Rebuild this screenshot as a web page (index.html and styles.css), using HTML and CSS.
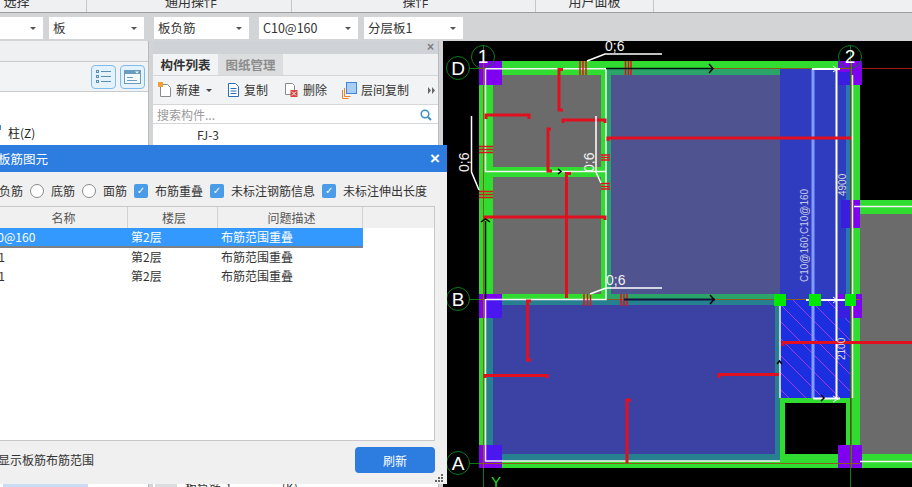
FILE: index.html
```html
<!DOCTYPE html>
<html lang="zh-CN">
<head>
<meta charset="utf-8">
<title>板筋图元</title>
<link rel="stylesheet" href="styles.css">
</head>
<body>
<div class="ribbon">
  <div class="ribbon-cell c1"><span>选择</span></div>
  <div class="ribbon-cell c2"><span>通用操作</span></div>
  <div class="ribbon-cell c3"><span>操作</span></div>
  <div class="ribbon-cell c4"><span>用户面板</span></div>
</div>
<div class="selectbar">
  <div class="select s0"><span></span><i></i></div>
  <div class="select s1"><span>板</span><i></i></div>
  <div class="select s2"><span>板负筋</span><i></i></div>
  <div class="select s3"><span>C10@160</span><i></i></div>
  <div class="select s4"><span>分层板1</span><i></i></div>
</div>
<div class="main">
  <section class="nav-panel">
    <div class="nav-head"></div>
    <div class="nav-tools">
      <button class="view-btn"><svg width="17" height="17" viewBox="0 0 17 17"><g fill="none" stroke="#5a90b8"><rect x="1.5" y="2.5" width="2" height="2"/><rect x="1.5" y="7.5" width="2" height="2"/><rect x="1.5" y="12.5" width="2" height="2"/><path d="M6 3.5h10M6 8.5h10M6 13.5h10"/></g></svg></button>
      <button class="view-btn"><svg width="19" height="17" viewBox="0 0 19 17"><rect x="1.5" y="2.5" width="16" height="13" fill="#f4fafe" stroke="#6a9cc0"/><rect x="2" y="3" width="15" height="3" fill="#6a9cc0"/><path d="M4 9.500h6M4 12.500h10" stroke="#6a9cc0"/><path d="M12 3.500h4l-2 2z" fill="#fff"/></svg></button>
    </div>
    <div class="nav-list">
      <div class="nav-item"><b></b>柱(Z)</div>
    </div>
    <div class="nav-last"></div>
  </section>
  <section class="list-panel">
    <div class="panel-title"><span>×</span></div>
    <div class="tabs"><div class="tab on">构件列表</div><div class="tab">图纸管理</div></div>
    <div class="tools">
      <div class="tool t-new">
        <svg width="15" height="16" viewBox="0 0 15 16"><path d="M2.500 2.500h7l3 3v9h-10z" fill="#fff" stroke="#8a8a8a"/><rect x="0" y="0" width="5" height="5" fill="#f0a030"/></svg>
        <span>新建</span><i></i>
      </div>
      <div class="tool t-copy">
        <svg width="13" height="16" viewBox="0 0 13 16"><path d="M1.500 1.500h7l3 3v10h-10z" fill="#fff" stroke="#2b6fb0"/><path d="M3.500 6.500h6M3.500 9h6M3.500 11.500h6" stroke="#2b6fb0"/></svg>
        <span>复制</span>
      </div>
      <div class="tool t-del">
        <svg width="15" height="16" viewBox="0 0 15 16"><path d="M1.500 1.500h7l2 2v9h-9z" fill="#fff" stroke="#8a8a8a"/><rect x="6.500" y="8" width="7" height="7" fill="#d9433f"/><path d="M8 9.500l4 4M12 9.500l-4 4" stroke="#fff"/></svg>
        <span>删除</span>
      </div>
      <div class="tool t-floor">
        <svg width="15" height="17" viewBox="0 0 15 17"><path d="M.5 8v8.500h6M2.500 6v8.500h6" fill="none" stroke="#e8842c"/><rect x="4.500" y=".5" width="10" height="11" fill="#a9cdf5" stroke="#3d86d8"/></svg>
        <span>层间复制</span>
      </div>
      <svg class="more" width="7" height="7" viewBox="0 0 7 7"><path d="M0 0l3 3.500L0 7zM4 0l3 3.500L4 7z" fill="#666"/></svg>
    </div>
    <div class="search"><span>搜索构件...</span>
      <svg width="12" height="12" viewBox="0 0 12 12"><circle cx="5" cy="5" r="3.800" fill="none" stroke="#3a8fc8" stroke-width="1.500"/><path d="M8 8l3 3" stroke="#3a8fc8" stroke-width="2"/></svg>
    </div>
    <div class="tree-row">FJ-3</div>
    <div class="table-last"><em></em><span>板负筋-1</span><span class="last-b">(K)</span></div>
  </section>
  <div class="gutter"></div>
  <section class="cad">
    <svg class="cad-svg" width="469" height="446" viewBox="443 41 469 446">
      <defs>
        <pattern id="hatch" width="17" height="17" patternUnits="userSpaceOnUse">
          <path d="M-2 -2L19 19M-19 -2L2 19M15 -2L36 19" stroke="#c040f0" stroke-width=".8"/>
        </pattern>
      </defs>
      <rect x="443" y="41" width="469" height="446" fill="#000"/>

      <!-- walls -->
      <rect x="479" y="61" width="383" height="14" fill="#2fdc2f"/>
      <rect x="479" y="61" width="14" height="407" fill="#2fdc2f"/>
      <rect x="846" y="61" width="14" height="407" fill="#2fdc2f"/>
      <rect x="479" y="454" width="381" height="14" fill="#2fdc2f"/>
      <rect x="860" y="200" width="52" height="14" fill="#2fdc2f"/>
      <rect x="860" y="454" width="52" height="14" fill="#2fdc2f"/>

      <!-- rooms -->
      <rect x="493" y="75" width="108" height="92" fill="#6b6b6b"/>
      <rect x="493" y="167" width="113" height="10" fill="#2fdc2f"/>
      <rect x="493" y="177" width="108" height="117" fill="#6b6b6b"/>
      <rect x="601" y="75" width="5" height="225" fill="#2fdc2f"/>
      <rect x="606" y="69" width="174" height="6" fill="#2aa468"/>
      <rect x="606" y="75" width="5" height="225" fill="#2aa468"/>
      <rect x="611" y="75" width="169" height="220" fill="#4f5490"/>
      <rect x="606" y="294" width="174" height="6" fill="#2aa468"/>
      <rect x="493" y="294" width="113" height="6" fill="#2fdc2f"/>
      <rect x="780" y="69" width="66" height="231" fill="#2f3cbf"/>
      <rect x="846" y="75" width="5" height="225" fill="#2a78b0"/>
      <rect x="860" y="214" width="52" height="240" fill="#6b6b6b"/>

      <rect x="485" y="300" width="295" height="161" fill="#27808f"/>
      <rect x="493" y="305" width="282" height="149" fill="#3c42a4"/>

      <!-- hatched overlap -->
      <rect x="780" y="300" width="71" height="98" fill="#1c2fe0"/>
      <rect x="780" y="300" width="71" height="98" fill="url(#hatch)"/>
      <rect x="780" y="398" width="80" height="70" fill="#2fdc2f"/>
      <rect x="785" y="403" width="61" height="51" fill="#000"/>

      <!-- columns -->
      <rect x="479" y="61" width="23" height="24" fill="#8000f0"/>
      <rect x="838" y="61" width="24" height="24" fill="#8000f0"/>
      <rect x="838" y="72" width="13" height="13" fill="#3a1ee0"/>
      <rect x="841" y="200" width="19" height="28" fill="#8000f0"/>
      <rect x="841" y="200" width="10" height="28" fill="#3a1ee0"/>
      <rect x="479" y="294" width="23" height="24" fill="#8000f0"/>
      <rect x="487" y="300" width="15" height="18" fill="#4a18ee"/>
      <rect x="838" y="294" width="24" height="24" fill="#8000f0"/>
      <rect x="838" y="300" width="13" height="18" fill="#3a1ee0"/>
      <rect x="479" y="445" width="23" height="23" fill="#8000f0"/>
      <rect x="487" y="445" width="15" height="16" fill="#4a18ee"/>
      <rect x="838" y="445" width="24" height="23" fill="#8000f0"/>

      <!-- axis lines -->
      <g stroke="#0a7a1e" fill="none">
        <path d="M483.500 45V487M850.500 45V487M470 68.500H479M470 299.500H479M470 463.500H479"/>
        <circle cx="458" cy="68" r="11.500"/>
        <circle cx="483" cy="57" r="11.500"/>
        <circle cx="850" cy="57" r="11.500"/>
        <circle cx="458" cy="299" r="11.500"/>
        <circle cx="458" cy="463" r="11.500"/>
      </g>
      <path d="M479 68.500H850" stroke="#8c5a1c"/>
      <path d="M862 68.500H912" stroke="#a01818"/>
      <path d="M483.500 61V468M851.500 61V468M479 299.500H860M479 463.500H860" stroke="#8c5a1c"/>
      <path d="M851.500 200V228" stroke="#d01070"/>

      <!-- white frame lines -->
      <g stroke="#f4f4f4" stroke-width="1.500" fill="none">
        <path d="M485.500 68.700H606M485.500 68.700V171.500H606M606 68.700V299.500H485.500V461H780"/>
        <path d="M780 305V398M852.500 75V398M854 206.500H912M860 461.500H912"/>
      </g>
      <path d="M813 69V398" stroke="#7f9cff" stroke-width="3"/>
      <path d="M836.500 69V399" stroke="#fff" stroke-width="2"/>
      <path d="M812 69H840M806 300H846M813 398.500H840" stroke="#fff" stroke-width="2"/>
      <path d="M833 66l4 3-4 3M833 297l4 3-4 3M833 396l5 3-5 3" fill="none" stroke="#fff"/>

      <!-- rebar ticks -->
      <g stroke="#e01020" stroke-width="1.500">
        <path d="M580 61V75M583 61V75M586 61V75M625.500 61V75M628.500 61V75M631 61V75"/>
        <path d="M479 146.500H493M479 149.500H493M479 152.500H493M479 191.500H493M479 194.500H493M479 197.500H493"/>
        <path d="M601 155H610M601 157.500H610M601 160H610M601 183.500H610M601 186.500H610M601 189H610"/>
        <path d="M584 294V306M587.500 294V306M590.500 294V306M621 294V306M624 294V306M627 294V306"/>
      </g>

      <!-- red rebars -->
      <g stroke="#e01020" stroke-width="3" fill="none">
        <path d="M563 69.500H559V110H563"/>
        <path d="M486 119V115H529V119"/>
        <path d="M563 123V120H605V123"/>
        <path d="M551 129H548V171H552"/>
        <path d="M571 173.500H566.500V298"/>
        <path d="M485 220V217H605V220"/>
        <path d="M608 141V138H851"/>
        <path d="M531 301H527.500V360H531"/>
        <path d="M485 378V375.500H547V378"/>
        <path d="M631 400H627V463"/>
        <path d="M783 346V342.500H912"/>
        <path d="M719 378V374.500H779"/>
      </g>

      <!-- arrows -->
      <path d="M606 68.500H712" stroke="#061010" stroke-width="1.500"/>
      <path d="M624 299.500H715" stroke="#10103a" stroke-width="2"/>
      <path d="M485.500 221V299" stroke="#000" stroke-width="1.500"/>
      <g fill="none" stroke="#000" stroke-width="1.500">
        <path d="M709 64l4 4.500-4 4.500"/>
        <path d="M710 295l4 4.500-4 4.500"/>
        <path d="M481 222l4.500-3 4.500 3"/>
        <path d="M558 169l3 2.500-3 2.500"/>
        <path d="M777 364l2.500-3 2.500 3"/>
        <path d="M821 395l3 3-3 3"/>
      </g>

      <!-- green nodes -->
      <rect x="774" y="294" width="12" height="12" fill="#00e800"/>
      <rect x="809" y="294" width="12" height="12" fill="#00e800"/>
      <rect x="845" y="294" width="11" height="12" fill="#00e800"/>

      <!-- annotations -->
      <g stroke="#fff" stroke-width="1.500" fill="none">
        <path d="M587 61L605 54H662"/>
        <path d="M590 294L606 288H662"/>
        <path d="M471.500 116V172L479 190"/>
        <path d="M596 116V172L601 183"/>
      </g>
      <g class="anno">
        <text x="605" y="51">0;6</text>
        <text x="606" y="285">0;6</text>
        <text transform="translate(469 172) rotate(-90)">0;6</text>
        <text transform="translate(594 172) rotate(-90)">0;6</text>
      </g>
      <g class="dim">
        <text transform="translate(808 282) rotate(-90)">C10@160;C10@160</text>
        <text class="dim-b" transform="translate(846 196) rotate(-90)">4900</text>
        <text class="dim-b" transform="translate(845 360) rotate(-90)">2100</text>
      </g>
      <g class="axis-label">
        <text x="458" y="75">D</text>
        <text x="483" y="63">1</text>
        <text x="850" y="63">2</text>
        <text x="458" y="306">B</text>
        <text x="458" y="470">A</text>
      </g>
      <text class="axis-y" x="491" y="487">Y</text>
    </svg>
  </section>
</div>

<div class="dialog">
  <header class="dlg-title"><span>板筋图元</span><b>×</b></header>
  <div class="filters">
    <span class="f-first">板负筋</span>
    <i class="radio"></i><span>底筋</span>
    <i class="radio"></i><span>面筋</span>
    <i class="check">✓</i><span>布筋重叠</span>
    <i class="check">✓</i><span>未标注钢筋信息</span>
    <i class="check">✓</i><span>未标注伸出长度</span>
  </div>
  <div class="grid">
    <div class="g-row g-head"><div class="c-name">名称</div><div class="c-floor">楼层</div><div class="c-desc">问题描述</div></div>
    <div class="g-row g-sel"><div class="c-name"><span>C10@160</span></div><div class="c-floor">第2层</div><div class="c-desc">布筋范围重叠</div></div>
    <div class="g-row"><div class="c-name"><span>FJ-1</span></div><div class="c-floor">第2层</div><div class="c-desc">布筋范围重叠</div></div>
    <div class="g-row"><div class="c-name"><span>FJ-1</span></div><div class="c-floor">第2层</div><div class="c-desc">布筋范围重叠</div></div>
  </div>
  <footer class="dlg-foot"><span>显示板筋布筋范围</span><button>刷新</button></footer>
  <svg class="grip" width="9" height="9" viewBox="0 0 9 9"><path d="M6 0h2v2H6zM3 3h2v2H3zM6 3h2v2H6zM0 6h2v2H0zM3 6h2v2H3zM6 6h2v2H6z" fill="#666"/></svg>
</div>
</body>
</html>
```

FILE: styles.css
```css
* { box-sizing: border-box; }
html, body { margin: 0; height: 487px; overflow: hidden; }
body {
  width: 912px;
  position: relative;
  background: #d2d4d6;
  color: #222;
  font: 12px/16px "Noto Sans CJK SC", "Liberation Sans", sans-serif;
  display: flex;
  flex-direction: column;
}

/* ribbon strip */
.ribbon {
  height: 13px;
  flex: none;
  display: flex;
  background: #eff0f1;
  border-bottom: 1px solid #9a9c9e;
  overflow: hidden;
}
.ribbon-cell {
  height: 12px;
  text-align: center;
  border-right: 1px solid #c4c6c8;
  overflow: hidden;
  color: #333;
  font-size: 13px;
}
.ribbon-cell span { display: block; margin-top: -8px; line-height: 18px; }
.c1 { width: 143px; margin-left: -56px; padding-left: 3px; }
.c2 { width: 205px; padding-left: 4px; }
.c3 { width: 244px; padding-left: 4px; }
.c4 { width: 118px; }

/* selects */
.selectbar {
  height: 28px;
  flex: none;
  display: flex;
  align-items: flex-start;
  padding-top: 4px;
  background: #d2d4d6;
}
.select {
  height: 22px;
  background: #fff;
  display: flex;
  align-items: center;
  justify-content: space-between;
  padding: 0 7px 0 4px;
  font-size: 12.500px;
  color: #333;
}
.select i {
  width: 0; height: 0;
  border: 3px solid transparent;
  border-top: 3px solid #555;
  border-bottom: 0;
}
.s0 { width: 43px; margin-right: 6px; }
.s1 { width: 95px; margin-right: 10px; }
.s2 { width: 95px; margin-right: 10px; }
.s3 { width: 99px; margin-right: 6px; }
.s4 { width: 99px; }

/* main row */
.main { flex: 1; display: flex; min-height: 0; }

.nav-panel {
  width: 149px;
  flex: none;
  display: flex;
  flex-direction: column;
  background: #fff;
  border-right: 1px solid #b8babc;
}
.nav-head { height: 21px; background: #eff0f1; border-bottom: 1px solid #c8cacc; }
.nav-tools {
  height: 30px;
  display: flex;
  justify-content: flex-end;
  align-items: center;
  gap: 4px;
  padding-right: 3px;
  background: #f2f3f4;
  border-bottom: 1px solid #c8cacc;
}
.view-btn {
  width: 25px;
  height: 24px;
  padding: 0;
  display: flex;
  align-items: center;
  justify-content: center;
  background: #e4f2fd;
  border: 1px solid #7cbbec;
  border-radius: 4px;
}
.nav-list { flex: 1; padding-top: 33px; }
.nav-item { padding-left: 8px; line-height: 16px; position: relative; }
.nav-item b { position: absolute; left: 0; top: 0; width: 1px; height: 5px; background: #3a8fc8; }
.nav-last { height: 14px; margin: 0 60px 0 3px; background: #c9dcf3; }

.list-panel {
  width: 286px;
  margin-left: 4px;
  flex: none;
  display: flex;
  flex-direction: column;
  background: #fff;
  border-right: 1px solid #b8babc;
}
.panel-title {
  height: 13px;
  background: #cfd2d6;
  text-align: right;
  padding-right: 4px;
  color: #7a7c80;
  font: bold 12px/12px "Liberation Sans", sans-serif;
}
.tabs { height: 22px; display: flex; background: #eff0f1; border-bottom: 1px solid #d4d6d8; }
.tab {
  width: 65px;
  text-align: center;
  line-height: 21px;
  font-size: 12.500px;
  background: #dcdddf;
  color: #8c8c8c;
  font-weight: 700;
}
.tab.on { background: #f2f3f4; color: #333; }
.tools {
  height: 29px;
  position: relative;
  display: flex;
  align-items: center;
  background: #f2f3f4;
  border-bottom: 1px solid #d4d6d8;
  padding-left: 5px;
}
.tool { display: flex; align-items: center; font-size: 12px; color: #333; }
.tool span { margin-left: 4px; }
.tool i {
  width: 0; height: 0; margin-left: 6px;
  border: 3px solid transparent;
  border-top: 3px solid #444;
  border-bottom: 0;
}
.t-new { width: 69px; }
.t-new span { margin-left: 3px; }
.t-copy { width: 57px; }
.t-del { width: 58px; }
.t-floor { width: 86px; }
.more { flex: none; }
.search {
  height: 19px;
  display: flex;
  align-items: center;
  justify-content: space-between;
  padding: 2px 6px 0 4px;
  color: #999;
  border-bottom: 1px solid #d4d6d8;
}
.tree-row { padding-left: 44px; line-height: 22px; color: #333; font-size: 12px; }
.table-last {
  margin-top: auto;
  height: 14px;
  display: flex;
  overflow: hidden;
  color: #333;
}
.table-last em { width: 22px; background: #dcdddf; margin: 0 8px 0 2px; }
.table-last span { line-height: 28px; height: 14px; }
.last-b { margin-left: 50px; }

.gutter { width: 4px; flex: none; background: #d2d4d6; }
.cad { width: 469px; flex: none; background: #000; }
.cad-svg { display: block; }
.anno text { fill: #f2f2f2; font: 14px "Liberation Sans", sans-serif; }
.dim text { fill: #c8cce8; font: 10px "Liberation Sans", sans-serif; }
.dim .dim-b { fill: #d8d8d8; }
.axis-label text {
  fill: #fff;
  font: 19px "Liberation Sans", sans-serif;
  text-anchor: middle;
}
.axis-y { fill: #22dd22; font: 15px "Liberation Sans", sans-serif; }

/* dialog overlay */
.dialog {
  position: absolute;
  left: 0;
  top: 145px;
  width: 447px;
  height: 339px;
  background: #f0f0f0;
  display: flex;
  flex-direction: column;
  overflow: hidden;
}
.dlg-title {
  height: 27px;
  flex: none;
  background: #2d7de0;
  color: #fff;
  display: flex;
  align-items: center;
  justify-content: space-between;
  padding-right: 7px;
  font-size: 12.500px;
}
.dlg-title span { margin-left: -2px; }
.dlg-title b { font: bold 17px/17px "Liberation Sans", sans-serif; }
.filters {
  height: 34px;
  flex: none;
  display: flex;
  align-items: center;
  padding-top: 3px;
  color: #333;
  font-size: 12px;
}
.f-first { margin-left: -13px; }
.radio {
  width: 14px;
  height: 14px;
  border-radius: 50%;
  background: #fff;
  border: 1px solid #8a8a8a;
  margin-left: 7px;
  margin-right: 7px;
  flex: none;
}
.check {
  width: 14px;
  height: 14px;
  border-radius: 2px;
  background: #4a9be8;
  color: #fff;
  font: bold 10px/14px "DejaVu Sans", sans-serif;
  text-align: center;
  margin-left: 7px;
  margin-right: 7px;
  flex: none;
}
.grid {
  width: 435px;
  height: 235px;
  flex: none;
  background: #fff;
  border: 1px solid #c8c8c8;
  border-left: 0;
}
.g-row { display: flex; height: 19px; line-height: 18px; width: 363px; color: #333; }
.g-head {
  height: 21px;
  line-height: 22px;
  width: 100%;
  background: #f0f0f0;
  color: #555;
}
.g-head > div { text-align: center; border-right: 1px solid #d2d2d2; }
.g-sel {
  height: 20px;
  background: #3399ff;
  color: #fff;
  border-bottom: 2px solid #7d8084;
}
.c-name { width: 128px; overflow: hidden; }
.c-name span { display: block; margin-left: -17px; }
.c-floor { width: 90px; padding-left: 3px; }
.c-desc { width: 145px; padding-left: 3px; }
.dlg-foot {
  flex: 1;
  width: 435px;
  display: flex;
  align-items: center;
  justify-content: space-between;
  padding-bottom: 5px;
  font-size: 12px;
  color: #333;
}
.dlg-foot span { margin-left: -2px; }
.dlg-foot button {
  width: 80px;
  height: 26px;
  border: 0;
  border-radius: 4px;
  background: #2d7de0;
  color: #fff;
  font: 12px "Noto Sans CJK SC", sans-serif;
}
.grip { position: absolute; right: 3px; bottom: 1px; }
```
